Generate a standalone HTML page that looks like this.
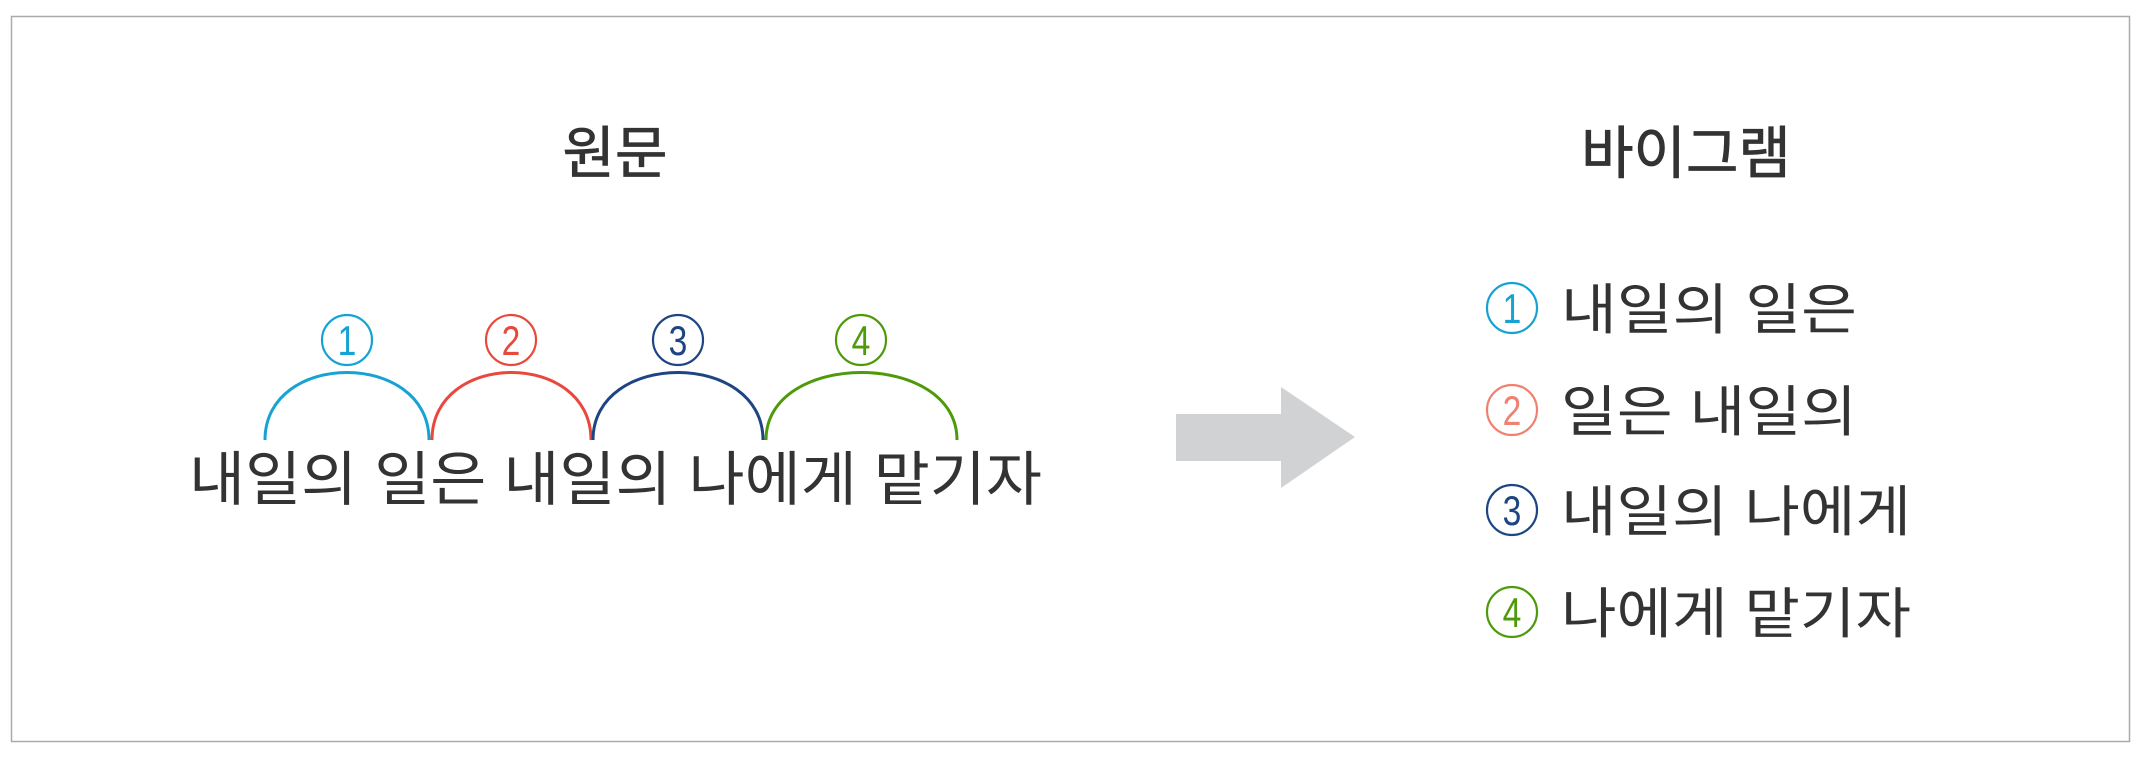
<!DOCTYPE html>
<html><head><meta charset="utf-8"><style>
html,body{margin:0;padding:0;background:#fff;width:2144px;height:769px;overflow:hidden}
.k{font-family:"Liberation Sans","Noto Sans CJK KR",sans-serif;fill:#333}
.d{font-family:"Liberation Sans",sans-serif;font-size:42px;text-anchor:middle}
</style></head><body>
<svg width="2144" height="769" viewBox="0 0 2144 769" xmlns="http://www.w3.org/2000/svg">
<rect x="11.5" y="16.5" width="2118" height="725" fill="#fff" stroke="#aaa" stroke-width="1.5"/>
<text class="k" x="615" y="173" font-size="57" text-anchor="middle" stroke="#333" stroke-width="0.8">원문</text>
<text class="k" x="1686" y="173" font-size="57" text-anchor="middle" stroke="#333" stroke-width="0.8">바이그램</text>
<g fill="none" stroke-width="3">
<path d="M265 440 C265 350 429 350 429 440" stroke="#16a3d4"/>
<path d="M432 440 C432 350 591 350 591 440" stroke="#e9493c"/>
<path d="M593 440 C593 350 763 350 763 440" stroke="#1e4583"/>
<path d="M766 440 C766 350 957 350 957 440" stroke="#4e9a0a"/>
</g>
<g fill="none" stroke-width="2.2">
<circle cx="347" cy="340" r="25" stroke="#16a3d4"/>
<circle cx="511" cy="340" r="25" stroke="#e9493c"/>
<circle cx="678" cy="340" r="25" stroke="#1e4583"/>
<circle cx="861" cy="340" r="25" stroke="#4e9a0a"/>
<circle cx="1512" cy="308" r="25" stroke="#16a3d4"/>
<circle cx="1512" cy="410" r="25" stroke="#f08070"/>
<circle cx="1512" cy="510" r="25" stroke="#1e4583"/>
<circle cx="1512" cy="612" r="25" stroke="#4e9a0a"/>
</g>
<g class="d">
<text transform="translate(347 355) scale(0.8 1)" fill="#16a3d4">1</text>
<text transform="translate(511 355) scale(0.8 1)" fill="#e9493c">2</text>
<text transform="translate(678 355) scale(0.8 1)" fill="#1e4583">3</text>
<text transform="translate(861 355) scale(0.8 1)" fill="#4e9a0a">4</text>
<text transform="translate(1512 323) scale(0.8 1)" fill="#16a3d4">1</text>
<text transform="translate(1512 425) scale(0.8 1)" fill="#f08070">2</text>
<text transform="translate(1512 525) scale(0.8 1)" fill="#1e4583">3</text>
<text transform="translate(1512 627) scale(0.8 1)" fill="#4e9a0a">4</text>
</g>
<text class="k" x="189" y="500" font-size="59" textLength="853" lengthAdjust="spacingAndGlyphs">내일의 일은 내일의 나에게 맡기자</text>
<polygon points="1176,414 1281,414 1281,387 1355,437 1281,488 1281,461 1176,461" fill="#d1d2d4"/>
<g class="k" font-size="55">
<text x="1561" y="329" textLength="296" lengthAdjust="spacingAndGlyphs">내일의 일은</text>
<text x="1561" y="431" textLength="296" lengthAdjust="spacingAndGlyphs">일은 내일의</text>
<text x="1561" y="531" textLength="350" lengthAdjust="spacingAndGlyphs">내일의 나에게</text>
<text x="1561" y="633" textLength="350" lengthAdjust="spacingAndGlyphs">나에게 맡기자</text>
</g>
</svg>
</body></html>
